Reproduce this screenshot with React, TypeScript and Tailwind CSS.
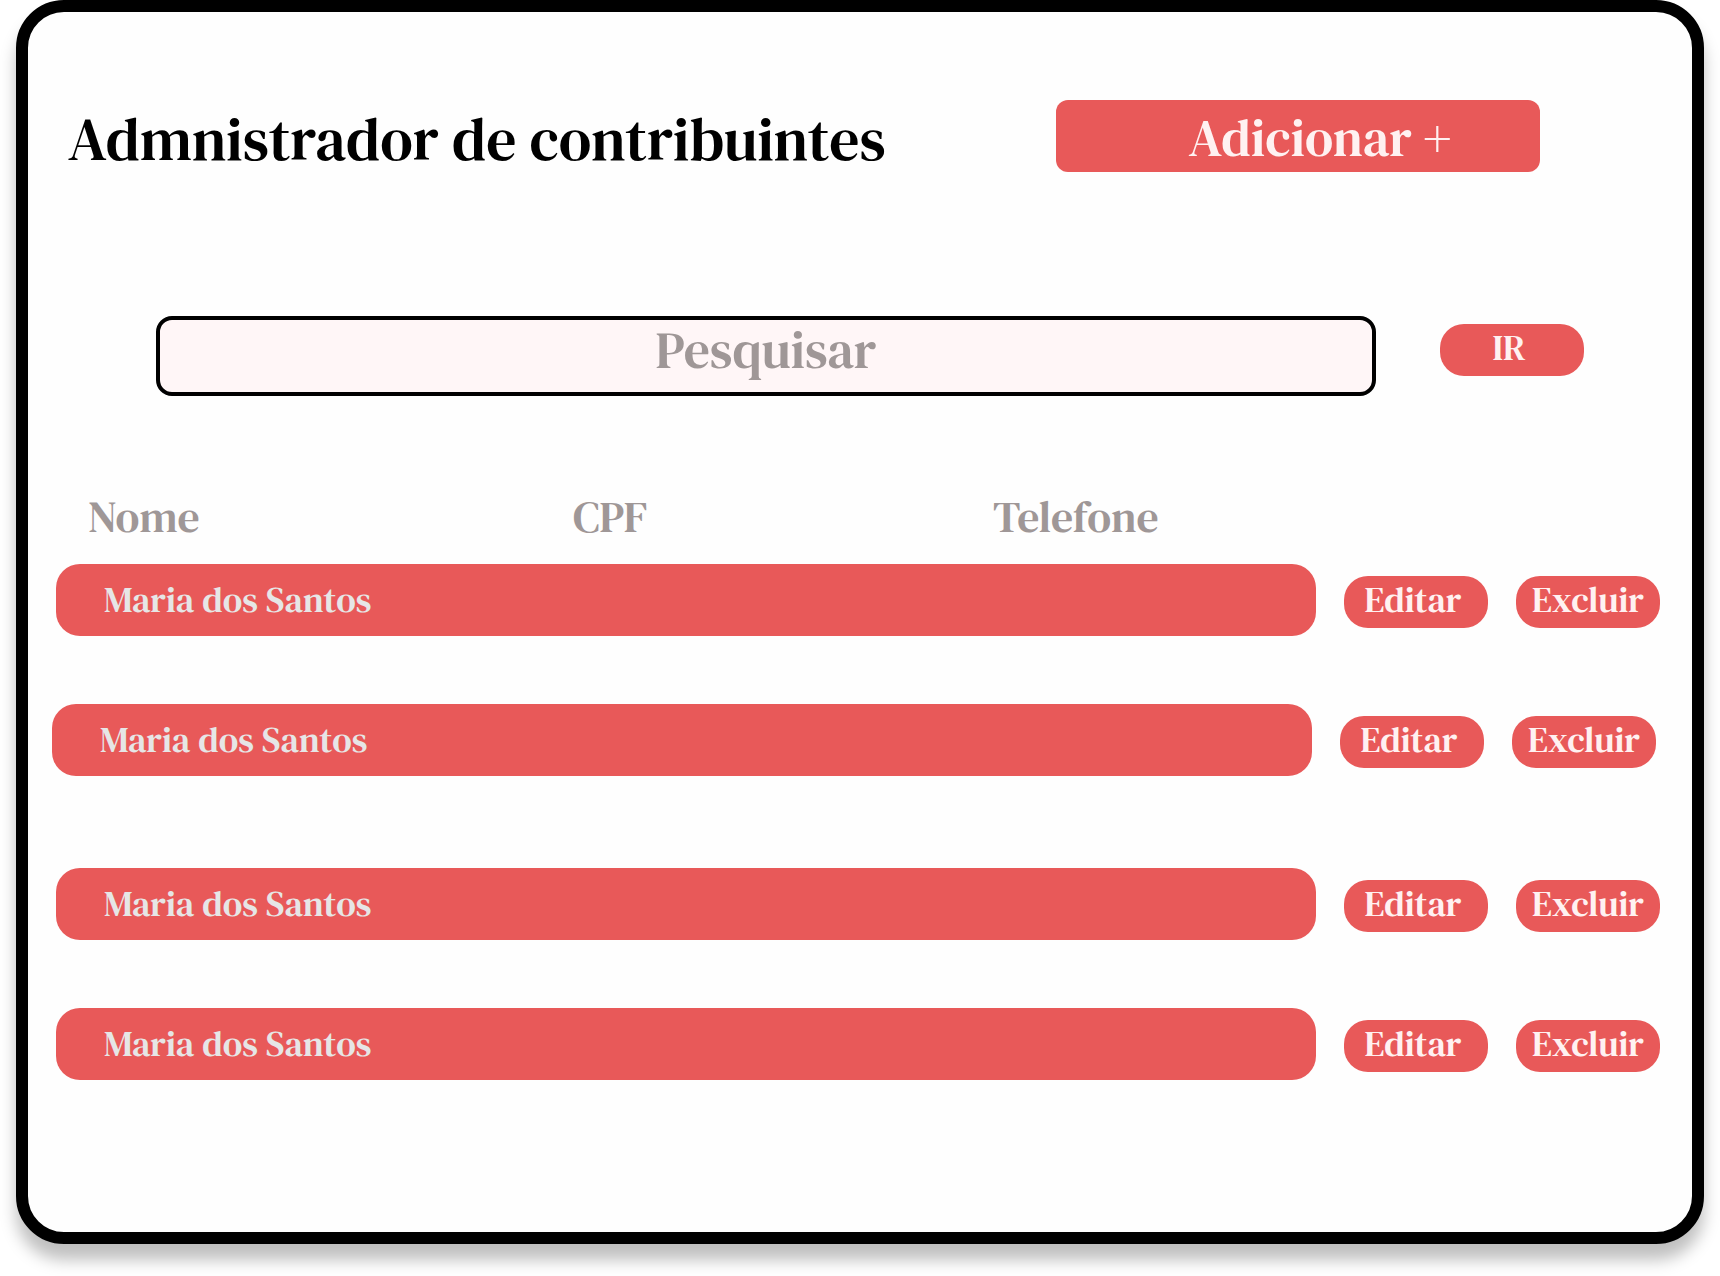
type Contributor = {
  id: number;
  name: string;
  cpf: string;
  phone: string;
  rowClass: string;
};

const contributors: Contributor[] = [
  { id: 1, name: "Maria dos Santos", cpf: "", phone: "", rowClass: "pl-7 pr-8" },
  { id: 2, name: "Maria dos Santos", cpf: "", phone: "", rowClass: "mt-[68px] pl-6 pr-9" },
  { id: 3, name: "Maria dos Santos", cpf: "", phone: "", rowClass: "mt-[92px] pl-7 pr-8" },
  { id: 4, name: "Maria dos Santos", cpf: "", phone: "", rowClass: "mt-[68px] pl-7 pr-8" },
];

function PillButton({ label, className = "" }: { label: string; className?: string }) {
  return (
    <button
      type="button"
      className={`h-[52px] w-36 shrink-0 rounded-3xl bg-[#e85959] pb-1 text-center text-[36px] leading-[48px] text-[#fff1f1] ${className}`}
    >
      {label}
    </button>
  );
}

function Header() {
  return (
    <header className="flex items-center justify-between gap-8 pt-[88px] pr-[152px] pl-10">
      <h1 className="pt-1.5 text-[60px] leading-[66px] font-normal whitespace-nowrap text-black">
        Admnistrador de contribuintes
      </h1>
      <button
        type="button"
        className="h-[72px] w-[484px] rounded-xl bg-[#e85959] pt-1 pl-11 text-[52px] leading-[68px] whitespace-nowrap text-[#fff1f1]"
      >
        Adicionar +
      </button>
    </header>
  );
}

function SearchBar() {
  return (
    <form
      role="search"
      className="mt-36 flex items-start gap-16 pr-[108px] pl-32"
      onSubmit={(event) => event.preventDefault()}
    >
      <input
        type="text"
        aria-label="Pesquisar"
        placeholder="Pesquisar"
        className="h-20 min-w-0 flex-1 rounded-2xl border-4 border-black bg-[#fff6f7] pb-3.5 text-center text-[52px] leading-[58px] text-[#9f9797] outline-none placeholder:text-[#9f9797] placeholder:opacity-100"
      />
      <PillButton label="IR" className="mt-2 pr-1.5" />
    </form>
  );
}

function ContributorTable() {
  return (
    <table role="table" className="mt-24 block w-full pb-[152px] text-left">
      <thead role="rowgroup" className="block">
        <tr role="row" className="flex pr-8 pl-7 text-[44px] leading-[50px] text-[#9f9797]">
          <th role="columnheader" className="min-w-0 flex-[517] font-normal">
            <span className="pl-8">Nome</span>
          </th>
          <th role="columnheader" className="min-w-0 flex-[420] font-normal">
            CPF
          </th>
          <th role="columnheader" className="min-w-0 flex-[323] font-normal">
            Telefone
          </th>
          <td role="cell" className="ml-7 w-36 shrink-0" />
          <td role="cell" className="ml-7 w-36 shrink-0" />
        </tr>
      </thead>
      <tbody role="rowgroup" className="mt-[22px] block">
        {contributors.map((person) => (
          <tr key={person.id} role="row" className={`flex items-center ${person.rowClass}`}>
            <td
              role="cell"
              className="h-[72px] min-w-0 flex-[517] rounded-l-3xl bg-[#e85959] text-[36px] leading-[72px] whitespace-nowrap text-[#e6e6e6]"
            >
              <span className="pl-12">{person.name}</span>
            </td>
            <td role="cell" className="h-[72px] min-w-0 flex-[420] bg-[#e85959]">
              {person.cpf}
            </td>
            <td role="cell" className="h-[72px] min-w-0 flex-[323] rounded-r-3xl bg-[#e85959]">
              {person.phone}
            </td>
            <td role="cell" className="ml-7 flex pt-1">
              <PillButton label="Editar" className="pr-1.5" />
            </td>
            <td role="cell" className="ml-7 flex pt-1">
              <PillButton label="Excluir" />
            </td>
          </tr>
        ))}
      </tbody>
    </table>
  );
}

export default function App() {
  return (
    <div className="bg-white px-4 pb-8 font-['DM_Serif_Text','Liberation_Serif',serif]">
      <main className="rounded-[48px] border-12 border-black bg-[#fefefe] shadow-[0_16px_16px_rgba(0,0,0,0.25)]">
        <Header />
        <SearchBar />
        <ContributorTable />
      </main>
    </div>
  );
}
